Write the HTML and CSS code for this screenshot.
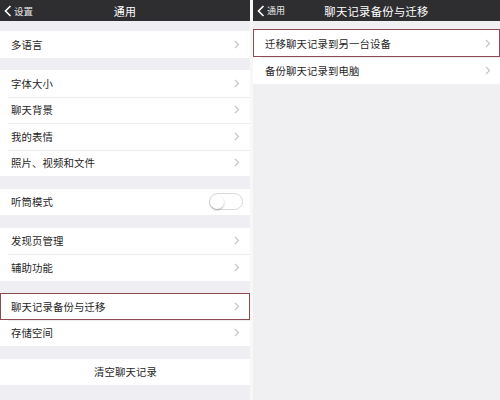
FILE: index.html
```html
<!DOCTYPE html>
<html>
<head>
  <meta charset="utf-8">
  <title>通用</title>
  <link rel="stylesheet" href="styles.css">
</head>
<body>
  <div class="screens">
    <!-- 左屏：通用 -->
    <div class="screen">
      <div class="nav-bar">
        <div class="nav-back">
          <svg class="nav-back_icon" width="8" height="12" viewBox="0 0 8 12"><polyline points="6.5,1 1.5,6 6.5,11" fill="none" stroke="#fff" stroke-width="1.6"/></svg>
          <span>设置</span>
        </div>
        <div class="nav-title">通用</div>
      </div>

      <div class="group group--first">
        <div class="cell"><span class="cell_label">多语言</span><svg class="cell_arrow" width="6" height="9" viewBox="0 0 6 9"><polyline points="1,1 4.5,4.5 1,8" fill="none" stroke="#c4c4c8" stroke-width="1.1"/></svg></div>
      </div>

      <div class="group">
        <div class="cell"><span class="cell_label">字体大小</span><svg class="cell_arrow" width="6" height="9" viewBox="0 0 6 9"><polyline points="1,1 4.5,4.5 1,8" fill="none" stroke="#c4c4c8" stroke-width="1.1"/></svg></div>
        <div class="cell"><span class="cell_label">聊天背景</span><svg class="cell_arrow" width="6" height="9" viewBox="0 0 6 9"><polyline points="1,1 4.5,4.5 1,8" fill="none" stroke="#c4c4c8" stroke-width="1.1"/></svg></div>
        <div class="cell"><span class="cell_label">我的表情</span><svg class="cell_arrow" width="6" height="9" viewBox="0 0 6 9"><polyline points="1,1 4.5,4.5 1,8" fill="none" stroke="#c4c4c8" stroke-width="1.1"/></svg></div>
        <div class="cell"><span class="cell_label">照片、视频和文件</span><svg class="cell_arrow" width="6" height="9" viewBox="0 0 6 9"><polyline points="1,1 4.5,4.5 1,8" fill="none" stroke="#c4c4c8" stroke-width="1.1"/></svg></div>
      </div>

      <div class="group">
        <div class="cell"><span class="cell_label">听筒模式</span><span class="switch"><span class="switch_knob"></span></span></div>
      </div>

      <div class="group">
        <div class="cell"><span class="cell_label">发现页管理</span><svg class="cell_arrow" width="6" height="9" viewBox="0 0 6 9"><polyline points="1,1 4.5,4.5 1,8" fill="none" stroke="#c4c4c8" stroke-width="1.1"/></svg></div>
        <div class="cell"><span class="cell_label">辅助功能</span><svg class="cell_arrow" width="6" height="9" viewBox="0 0 6 9"><polyline points="1,1 4.5,4.5 1,8" fill="none" stroke="#c4c4c8" stroke-width="1.1"/></svg></div>
      </div>

      <div class="group">
        <div class="cell cell--marked"><span class="cell_label">聊天记录备份与迁移</span><svg class="cell_arrow" width="6" height="9" viewBox="0 0 6 9"><polyline points="1,1 4.5,4.5 1,8" fill="none" stroke="#c4c4c8" stroke-width="1.1"/></svg></div>
        <div class="cell"><span class="cell_label">存储空间</span><svg class="cell_arrow" width="6" height="9" viewBox="0 0 6 9"><polyline points="1,1 4.5,4.5 1,8" fill="none" stroke="#c4c4c8" stroke-width="1.1"/></svg></div>
      </div>

      <div class="group">
        <div class="cell cell--center"><span class="cell_label">清空聊天记录</span></div>
      </div>
    </div>

    <!-- 右屏：聊天记录备份与迁移 -->
    <div class="screen screen--right">
      <div class="nav-bar">
        <div class="nav-back">
          <svg class="nav-back_icon" width="8" height="12" viewBox="0 0 8 12"><polyline points="6.5,1 1.5,6 6.5,11" fill="none" stroke="#fff" stroke-width="1.6"/></svg>
          <span>通用</span>
        </div>
        <div class="nav-title">聊天记录备份与迁移</div>
      </div>

      <div class="group group--right">
        <div class="cell cell--marked cell--tall"><span class="cell_label">迁移聊天记录到另一台设备</span><svg class="cell_arrow" width="6" height="9" viewBox="0 0 6 9"><polyline points="1,1 4.5,4.5 1,8" fill="none" stroke="#c4c4c8" stroke-width="1.1"/></svg></div>
        <div class="cell"><span class="cell_label">备份聊天记录到电脑</span><svg class="cell_arrow" width="6" height="9" viewBox="0 0 6 9"><polyline points="1,1 4.5,4.5 1,8" fill="none" stroke="#c4c4c8" stroke-width="1.1"/></svg></div>
      </div>
    </div>
  </div>
</body>
</html>
```

FILE: styles.css
```css
/* Общие стили */
body {
    margin: 0;
    background: #f7f7f8;
    font-family: "Noto Sans CJK SC", "Noto Sans", sans-serif;
    color: #1f1f1f;
}

.screens {
    display: flex;
    gap: 3px;
    height: 400px;
    overflow: hidden;
}

.screen {
    width: 250px;
    background: #efeff3;
}

.screen--right {
    flex: 1;
    background: #f0f0f2;
}

/* Шапка */
.nav-bar {
    height: 21px;
    background: #2e2e30;
    display: flex;
    align-items: center;
    justify-content: center;
    position: relative;
}

.nav-back {
    position: absolute;
    left: 4px;
    top: 0;
    height: 21px;
    display: flex;
    align-items: center;
    gap: 2px;
    font-size: 9.5px;
    color: #e8e8e8;
}

.screen--right .nav-back {
    left: 4px;
    font-size: 9px;
}

.nav-title {
    font-size: 11px;
    color: #fff;
    letter-spacing: 0.3px;
}

.screen--right .nav-title {
    font-size: 11.3px;
}

/* Группы и строки */
.group {
    background: #fff;
    margin-top: 12.5px;
}

.group--first {
    margin-top: 10px;
}

.group--right {
    margin-top: 8px;
}

.cell {
    height: 26.5px;
    display: flex;
    align-items: center;
    justify-content: space-between;
    padding: 0 10px 0 11px;
    position: relative;
}

.cell + .cell::before {
    content: "";
    position: absolute;
    top: 0;
    left: 8px;
    right: 0;
    border-top: 1px solid #ececee;
}

.cell_label {
    font-size: 10.4px;
    letter-spacing: 0.1px;
}

.cell--center {
    justify-content: center;
}

.cell--marked {
    outline: 1.5px solid #8e4a52;
    outline-offset: -1px;
    z-index: 1;
}

.cell--tall {
    height: 28px;
}

.screen--right .cell {
    padding-left: 12px;
    padding-right: 9px;
}

/* Переключатель */
.switch {
    width: 32px;
    height: 15px;
    border: 1px solid #d9d9dc;
    border-radius: 9px;
    background: #fff;
    display: flex;
    align-items: center;
    margin-right: -3px;
}

.switch_knob {
    width: 14px;
    height: 14px;
    border-radius: 50%;
    background: #fff;
    box-shadow: 0 1px 2px rgba(0, 0, 0, 0.3);
}
```
